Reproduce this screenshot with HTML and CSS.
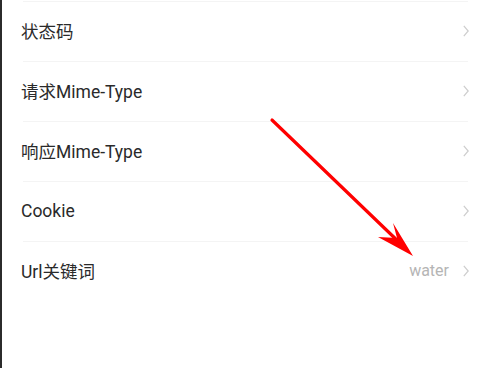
FILE: index.html
```html
<!DOCTYPE html>
<html lang="zh">
<head>
<meta charset="utf-8">
<link rel="stylesheet" href="styles.css">
</head>
<body>
<div class="screen">
  <div class="edge"></div>
  <div class="list">
    <div class="sep"></div>
    <div class="row"><span class="label">状态码</span><span class="right"><svg class="chev" viewBox="0 0 6 12"><path d="M0.8 0.8 L5.2 6 L0.8 11.2" /></svg></span></div>
    <div class="sep"></div>
    <div class="row"><span class="label">请求Mime-Type</span><span class="right"><svg class="chev" viewBox="0 0 6 12"><path d="M0.8 0.8 L5.2 6 L0.8 11.2" /></svg></span></div>
    <div class="sep"></div>
    <div class="row"><span class="label">响应Mime-Type</span><span class="right"><svg class="chev" viewBox="0 0 6 12"><path d="M0.8 0.8 L5.2 6 L0.8 11.2" /></svg></span></div>
    <div class="sep"></div>
    <div class="row"><span class="label">Cookie</span><span class="right"><svg class="chev" viewBox="0 0 6 12"><path d="M0.8 0.8 L5.2 6 L0.8 11.2" /></svg></span></div>
    <div class="sep"></div>
    <div class="row"><span class="label">Url关键词</span><span class="right"><span class="value">water</span><svg class="chev" viewBox="0 0 6 12"><path d="M0.8 0.8 L5.2 6 L0.8 11.2" /></svg></span></div>
  </div>
  <svg class="annot" viewBox="0 0 486 368" width="486" height="368">
    <line x1="272" y1="120" x2="402" y2="245" stroke="#ff0000" stroke-width="3.2" stroke-linecap="round"/>
    <polygon points="413,256 378,237 397,238 393,223" fill="#ff0000"/>
  </svg>
</div>
</body>
</html>
```

FILE: styles.css
```css
html, body {
  margin: 0;
  padding: 0;
  background: #ffffff;
}
.screen {
  position: relative;
  width: 486px;
  height: 368px;
  display: flex;
  overflow: hidden;
  font-family: Roboto, "Noto Sans CJK SC", sans-serif;
}
.edge {
  width: 2px;
  background: #2b2b2b;
  flex: none;
}
.list {
  flex: 1;
  display: flex;
  flex-direction: column;
  padding-top: 1px;
}
.sep {
  height: 1px;
  background: #f4f4f4;
  margin: 0 18px 0 21px;
}
.row {
  height: 59px;
  display: flex;
  align-items: center;
  justify-content: space-between;
  padding: 0 17px 2px 19px;
  box-sizing: border-box;
}
.label {
  font-size: 17.5px;
  color: #2a2a2a;
}
.right {
  display: flex;
  align-items: center;
  gap: 14px;
}
.value {
  font-size: 16px;
  color: #b5b5b5;
}
.chev {
  width: 6px;
  height: 12px;
  fill: none;
  stroke: #cdcdcd;
  stroke-width: 1.2;
}
.annot {
  position: absolute;
  left: 0;
  top: 0;
  pointer-events: none;
}
```
